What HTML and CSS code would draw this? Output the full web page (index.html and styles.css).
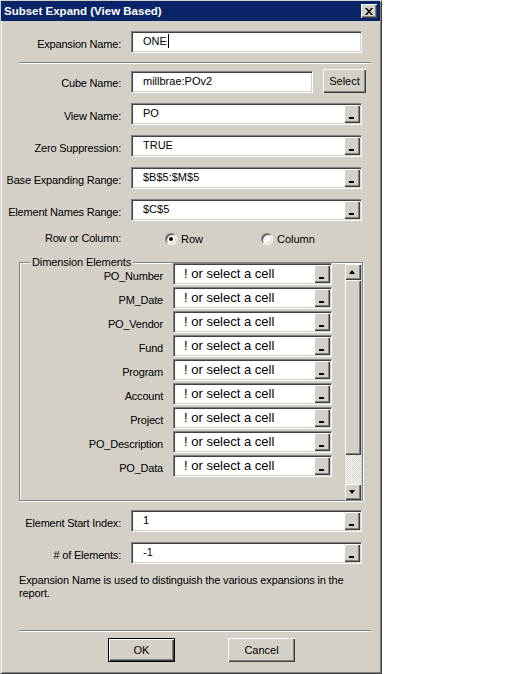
FILE: index.html
```html
<!DOCTYPE html>
<html>
<head>
<meta charset="utf-8">
<title>Subset Expand (View Based)</title>
<link rel="stylesheet" href="styles.css">
</head>
<body>
<div class="window">
  <div class="titlebar">
    <span class="title">Subset Expand (View Based)</span>
    <span class="close"><svg width="8" height="7" viewBox="0 0 8 7"><path d="M0 0h2l2 2.4 2-2.4h2l-3 3.5 3 3.5h-2l-2-2.4-2 2.4h-2l3-3.5z" fill="#000"/></svg></span>
  </div>
  <div class="body">
    <div class="row first">
      <span class="lbl">Expansion Name:</span>
      <div class="field"><span class="val">ONE</span><span class="caret"></span></div>
    </div>
    <div class="sep"></div>
    <div class="rows">
      <div class="row cube">
        <span class="lbl">Cube Name:</span>
        <div class="field"><span class="val">millbrae:POv2</span></div>
        <div class="btn select">Select</div>
      </div>
      <div class="row">
        <span class="lbl">View Name:</span>
        <div class="field"><span class="val">PO</span><span class="ell"></span></div>
      </div>
      <div class="row">
        <span class="lbl">Zero Suppression:</span>
        <div class="field"><span class="val">TRUE</span><span class="ell"></span></div>
      </div>
      <div class="row">
        <span class="lbl">Base Expanding Range:</span>
        <div class="field"><span class="val">$B$5:$M$5</span><span class="ell"></span></div>
      </div>
      <div class="row">
        <span class="lbl">Element Names Range:</span>
        <div class="field"><span class="val">$C$5</span><span class="ell"></span></div>
      </div>
      <div class="row radio-row">
        <span class="lbl">Row or Column:</span>
        <div class="radios">
          <span class="opt"><span class="radio checked"></span>Row</span>
          <span class="opt"><span class="radio"></span>Column</span>
        </div>
      </div>
    </div>
    <div class="group">
      <span class="legend">Dimension Elements</span>
      <div class="dims">
        <span class="dlbl">PO_Number</span><div class="field dfield"><span class="val">! or select a cell</span><span class="ell"></span></div>
        <span class="dlbl">PM_Date</span><div class="field dfield"><span class="val">! or select a cell</span><span class="ell"></span></div>
        <span class="dlbl">PO_Vendor</span><div class="field dfield"><span class="val">! or select a cell</span><span class="ell"></span></div>
        <span class="dlbl">Fund</span><div class="field dfield"><span class="val">! or select a cell</span><span class="ell"></span></div>
        <span class="dlbl">Program</span><div class="field dfield"><span class="val">! or select a cell</span><span class="ell"></span></div>
        <span class="dlbl">Account</span><div class="field dfield"><span class="val">! or select a cell</span><span class="ell"></span></div>
        <span class="dlbl">Project</span><div class="field dfield"><span class="val">! or select a cell</span><span class="ell"></span></div>
        <span class="dlbl">PO_Description</span><div class="field dfield"><span class="val">! or select a cell</span><span class="ell"></span></div>
        <span class="dlbl">PO_Data</span><div class="field dfield"><span class="val">! or select a cell</span><span class="ell"></span></div>
      </div>
      <div class="scrollbar">
        <span class="sb-btn up"></span>
        <span class="sb-thumb"></span>
        <span class="sb-track"></span>
        <span class="sb-btn down"></span>
      </div>
    </div>
    <div class="rows rows2">
      <div class="row">
        <span class="lbl">Element Start Index:</span>
        <div class="field"><span class="val">1</span><span class="ell"></span></div>
      </div>
      <div class="row">
        <span class="lbl"># of Elements:</span>
        <div class="field"><span class="val">-1</span><span class="ell"></span></div>
      </div>
    </div>
    <p class="desc">Expansion Name is used to distinguish the various expansions in the report.</p>
    <div class="sep sep2"></div>
    <div class="buttons">
      <div class="btn ok">OK</div>
      <div class="btn cancel">Cancel</div>
    </div>
  </div>
</div>
</body>
</html>
```

FILE: styles.css
```css
* { box-sizing: border-box; }
html, body { margin: 0; padding: 0; background: #fff; }
body {
  font-family: "Liberation Sans", Arial, sans-serif;
  font-size: 11px;
  color: #000;
}
.window {
  width: 382px;
  height: 674px;
  background: #d4d0c8;
  border: 1px solid;
  border-color: #d4d0c8 #404040 #404040 #d4d0c8;
  box-shadow: inset 1px 1px #fff, inset -1px -1px #808080;
  display: flex;
  flex-direction: column;
}
.titlebar {
  height: 20px;
  margin-right: 1px;
  background: #0a246a;
  color: #fff;
  font-weight: bold;
  font-size: 11.5px;
  display: flex;
  align-items: center;
  justify-content: space-between;
  padding: 0 3px 0 3px;
}
.close {
  width: 16px;
  height: 14px;
  background: #d4d0c8;
  box-shadow: inset 1px 1px #fff, inset -1px -1px #404040, inset -2px -2px #808080;
  display: flex;
  align-items: center;
  justify-content: center;
  padding-right: 1px;
}
.close svg { display: block; }
.body {
  flex: 1;
  padding: 10px 19px 0 3px;
}
.row {
  display: grid;
  grid-template-columns: 117px 1fr;
  column-gap: 10px;
  align-items: center;
  height: 22px;
}
.lbl {
  white-space: nowrap;
  display: flex;
  justify-content: flex-end;
  letter-spacing: -0.2px;
  padding-top: 3px;
}
.field {
  height: 22px;
  background: #fff;
  border: 1px solid;
  border-color: #808080 #fff #fff #808080;
  box-shadow: inset 1px 1px #404040, inset -1px -1px #d4d0c8;
  padding-left: 11px;
  display: flex;
  align-items: center;
  white-space: nowrap;
}
.val { line-height: 13px; padding-bottom: 2px; }
.caret {
  display: inline-block;
  width: 1px;
  height: 14px;
  background: #000;
  margin-left: 1px;
  margin-bottom: 2px;
}
.ell {
  position: relative;
  width: 16px;
  height: 18px;
  margin: 0 1px 0 auto;
  align-self: flex-start;
  margin-top: 1px;
  background: #d4d0c8;
  box-shadow: inset 1px 1px #fff, inset -1px -1px #404040, inset -2px -2px #808080;
}
.ell::after {
  content: "";
  position: absolute;
  left: 5px;
  bottom: 4px;
  width: 5px;
  height: 2px;
  background: #000;
}
.sep {
  margin: 9px 0 0 15px;
  width: 352px;
  height: 2px;
  border-top: 1px solid #808080;
  border-bottom: 1px solid #fff;
}
.rows {
  margin-top: 5px;
  display: flex;
  flex-direction: column;
  gap: 10px;
}
.row.cube {
  grid-template-columns: 117px 182px 43px;
  height: 24px;
}
.row.cube .field { align-self: end; }
.btn {
  height: 24px;
  background: #d4d0c8;
  box-shadow: inset 1px 1px #fff, inset -1px -1px #404040, inset -2px -2px #808080;
  display: flex;
  align-items: center;
  justify-content: center;
  padding-bottom: 1px;
}
.row.radio-row { height: 14px; }
.row.radio-row .lbl { padding-top: 0; }
.radios {
  display: flex;
  padding-left: 34px;
  padding-top: 2px;
}
.opt {
  display: flex;
  align-items: center;
  width: 96px;
  gap: 4px;
}
.radio {
  position: relative;
  width: 12px;
  height: 12px;
  border-radius: 50%;
  background: #fff;
  border: 1px solid;
  border-color: #808080 #fff #fff #808080;
  box-shadow: inset 1px 1px #404040, inset -1px -1px #d4d0c8;
}
.radio.checked::after {
  content: "";
  position: absolute;
  left: 3px;
  top: 3px;
  width: 4px;
  height: 4px;
  border-radius: 50%;
  background: #000;
}
.group {
  position: relative;
  margin: 17px 0 0 15px;
  width: 344px;
  height: 239px;
  border: 1px solid #808080;
  box-shadow: inset 1px 1px #fff, 1px 1px #fff;
  display: flex;
  align-items: flex-start;
}
.legend {
  position: absolute;
  left: 10px;
  top: -7px;
  padding: 0 2px;
  background: #d4d0c8;
  line-height: 13px;
  letter-spacing: -0.1px;
}
.dims {
  display: grid;
  grid-template-columns: 143px 159px;
  column-gap: 10px;
  row-gap: 2px;
  align-items: center;
}
.dlbl {
  text-align: right;
  white-space: nowrap;
  padding-top: 4px;
  letter-spacing: -0.2px;
}
.dfield {
  font-size: 13px;
  padding-left: 10px;
}
.dfield .val { padding-bottom: 1px; }
.scrollbar {
  margin: 1px 0 0 13px;
  width: 16px;
  height: 236px;
  display: flex;
  flex-direction: column;
}
.sb-btn {
  position: relative;
  height: 16px;
  background: #d4d0c8;
  box-shadow: inset 1px 1px #fff, inset -1px -1px #404040, inset -2px -2px #808080;
}
.sb-btn::after {
  content: "";
  position: absolute;
  left: 4px;
  width: 0;
  height: 0;
  border-left: 3.5px solid transparent;
  border-right: 3.5px solid transparent;
}
.sb-btn.up::after { top: 6px; border-bottom: 4px solid #000; }
.sb-btn.down::after { top: 6px; border-top: 4px solid #000; }
.sb-thumb {
  height: 175px;
  background: #d4d0c8;
  box-shadow: inset 1px 1px #fff, inset -1px -1px #404040, inset -2px -2px #808080;
}
.sb-track {
  height: 29px;
  background: repeating-conic-gradient(#fff 0 25%, #d4d0c8 0 50%) 0 0 / 2px 2px;
}
.rows2 { margin-top: 9px; }
.desc {
  margin: 10px 0 0 15px;
  width: 345px;
  line-height: 13px;
  letter-spacing: -0.15px;
}
.sep2 { margin-top: 30px; }
.buttons {
  display: flex;
  margin: 6px 0 0 104px;
  gap: 53px;
}
.buttons .btn { width: 67px; }
.btn.ok {
  border: 1px solid #000;
  box-shadow: inset 1px 1px #fff, inset -1px -1px #404040, inset -2px -2px #808080;
}
```
